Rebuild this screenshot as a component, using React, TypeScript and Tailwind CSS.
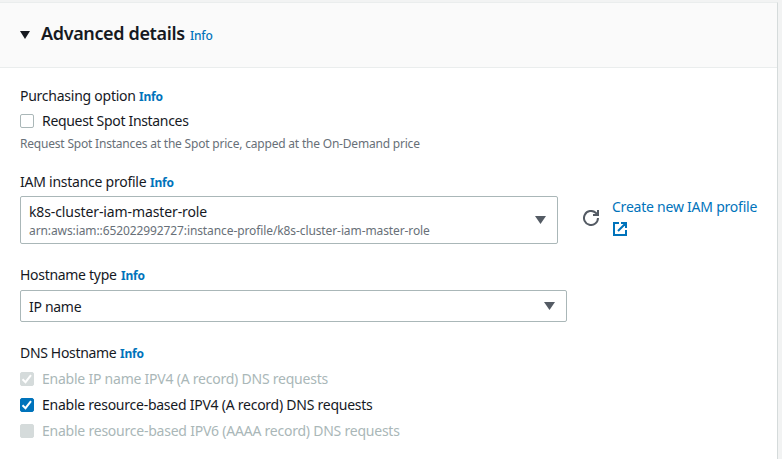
import type { ReactNode } from "react";

function Info({ className = "font-bold" }: { className?: string }) {
  return (
    <a className={`w-[23px] shrink-0 whitespace-nowrap text-[12px] tracking-[-0.2px] text-[#0073bb] ${className}`}>Info</a>
  );
}

function Label({ width, children }: { width: string; children: ReactNode }) {
  return (
    <div className="flex h-[22px] items-baseline gap-1 leading-[22px]">
      <span className={`shrink-0 whitespace-nowrap ${width}`}>{children}</span>
      <Info />
    </div>
  );
}

function Caret({ className, color = "#545b64" }: { className: string; color?: string }) {
  return (
    <svg className={`shrink-0 ${className}`} viewBox="0 0 10 8" preserveAspectRatio="none" fill={color}>
      <path d="M0 0h10L5 8z" />
    </svg>
  );
}

function Check({ checked = false, disabled = false, children }: { checked?: boolean; disabled?: boolean; children: ReactNode }) {
  const box = disabled
    ? "border-[#d5dbdb] bg-[#d5dbdb]"
    : checked
      ? "border-[#0073bb] bg-[#0073bb]"
      : "border-[#aab7b8] bg-white";
  return (
    <label className={`flex h-[26px] items-center gap-2 ${disabled ? "text-[#aab7b8]" : ""}`}>
      <span className={`size-[14px] shrink-0 rounded-[2px] border ${box}`}>
        {checked && (
          <svg viewBox="0 0 12 12" className="size-3" fill="none" stroke="white" strokeWidth="2">
            <path d="M1.5 6.2l3 3 5.5-7" />
          </svg>
        )}
      </span>
      <span className="whitespace-nowrap leading-[22px]">{children}</span>
    </label>
  );
}

export default function App() {
  return (
    <div className="h-[459px] w-[782px] overflow-hidden bg-[#f2f3f3] pt-[2px] font-['Noto_Sans','Open_Sans',sans-serif] text-[14px] text-[#16191f]">
      <section className="h-[457px] w-[778px] border-r border-t border-r-[#d5dbdb] border-t-[#eaeded] bg-white">
        <header className="flex h-[65px] items-center border-b border-[#eaeded] bg-[#fafafa] pl-5">
          <Caret className="mb-[1px] h-[8px] w-[10px]" color="#16191f" />
          <h2 className="mb-[3px] ml-[11px] flex items-baseline gap-[5px]">
            <span className="w-[144px] whitespace-nowrap text-[18px] font-semibold leading-[22px] tracking-[-0.36px]">Advanced details</span>
            <Info className="font-medium" />
          </h2>
        </header>
        <div className="px-5 pt-[17px]">
          <Label width="w-[115px]"><span className="tracking-[-0.25px]">Purchasing option</span></Label>
          <div className="pt-[1px]">
            <Check><span className="tracking-[-0.32px]">Request Spot Instances</span></Check>
          </div>
          <p className="h-[22px] whitespace-nowrap text-[12px] leading-[20px] text-[#687078]">
            <span className="tracking-[-0.2px]">Request Spot Instances at the Spot price, capped at the On-Demand price</span>
          </p>
          <div className="pt-[15px]">
            <Label width="w-[126px]"><span className="tracking-[-0.25px]">IAM instance profile</span></Label>
          </div>
          <div className="mt-[3px] flex">
            <button className="flex h-[48px] w-[538px] shrink-0 items-center justify-between rounded-[2px] border border-[#aab7b8] pl-2 pr-[11px] text-left">
              <span className="flex flex-col pt-[3px]">
                <span className="h-[19px] whitespace-nowrap leading-[18px] tracking-[-0.11px]">k8s-cluster-iam-master-role</span>
                <span className="h-[18px] whitespace-nowrap text-[12px] leading-[18px] tracking-[-0.1px] text-[#687078]">arn:aws:iam::652022992727:instance-profile/k8s-cluster-iam-master-role</span>
              </span>
              <Caret className="h-[8px] w-[11px]" />
            </button>
            <svg className="ml-[25px] mt-[14px] size-4 shrink-0" viewBox="0 0 16 16" fill="none" stroke="#545b64" strokeWidth="2">
              <path d="M15 8a7 7 0 1 1-2.3-5.2L15 5" />
              <path d="M15 0v5h-5" />
            </svg>
            <a className="ml-[13px] flex flex-col text-[#0073bb]">
              <span className="h-[22px] whitespace-nowrap leading-[22px] tracking-[-0.23px]">Create new IAM profile</span>
              <svg className="ml-[1px] mt-[4px] size-[14px]" viewBox="0 0 14 14" fill="none" stroke="currentColor" strokeWidth="2">
                <path d="M6 1H1v12h12V8M8 1h5v5M13 1L5 9" />
              </svg>
            </a>
          </div>
          <div className="pt-[20px]">
            <Label width="w-[97px]"><span className="tracking-[-0.3px]">Hostname type</span></Label>
          </div>
          <button className="mt-[4px] flex h-[32px] w-[547px] items-center justify-between rounded-[2px] border border-[#aab7b8] pl-2 pr-[11px]">
            <span className="tracking-[-0.3px]">IP name</span>
            <Caret className="h-[8px] w-[11px]" />
          </button>
          <div className="pt-[20px]">
            <Label width="w-[96px]"><span className="tracking-[-0.33px]">DNS Hostname</span></Label>
          </div>
          <div className="pt-[2px]">
            <Check checked disabled><span className="tracking-[-0.23px]">Enable IP name IPV4 (A record) DNS requests</span></Check>
            <Check checked><span className="tracking-[-0.25px]">Enable resource-based IPV4 (A record) DNS requests</span></Check>
            <Check disabled><span className="tracking-[-0.23px]">Enable resource-based IPV6 (AAAA record) DNS requests</span></Check>
          </div>
        </div>
      </section>
    </div>
  );
}
